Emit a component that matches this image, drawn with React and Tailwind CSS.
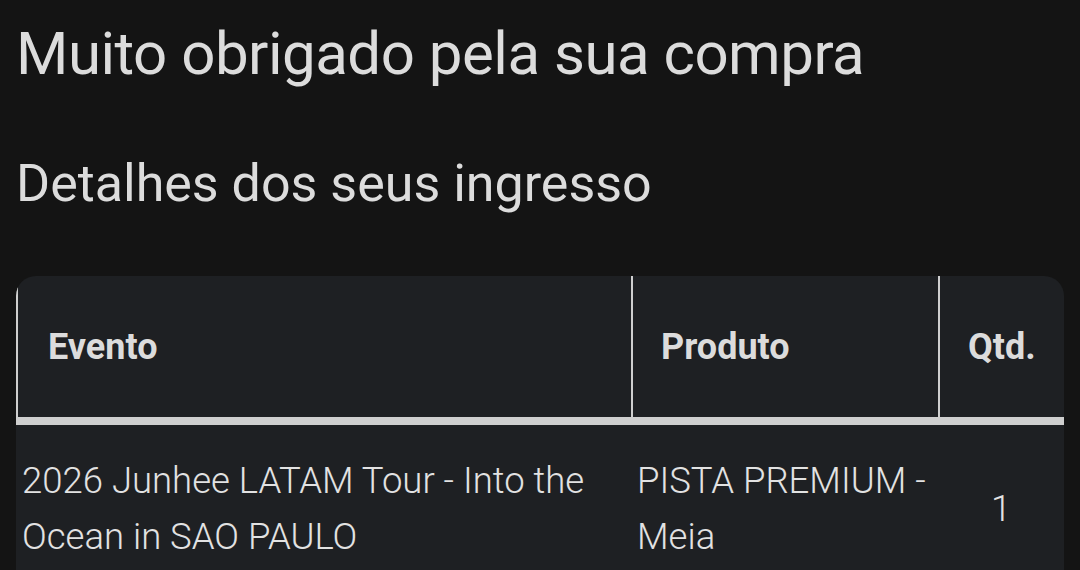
const ROW = {
  evento: '2026 Junhee LATAM Tour - Into the Ocean in SAO PAULO',
  produto: 'PISTA PREMIUM - Meia',
  qtd: 1,
}

export default function App() {
  return (
    <div className="min-h-[570px] bg-[#141414] px-4 pt-[14px] font-['Roboto',sans-serif] text-[#dcdcdc]">
      <h1 className="text-[60px] leading-[80px] tracking-[-0.5px]">Muito obrigado pela sua compra</h1>
      <h2 className="mt-[50px] text-[52px] leading-[80px]">Detalhes dos seus ingresso</h2>

      <table className="mt-[52px] w-[1048px] border-separate border-spacing-0 overflow-hidden rounded-t-[20px] bg-[#1e2023]">
        <thead>
          <tr className="h-[149px] text-left text-[36px] font-bold">
            <th className="w-[615px] border-b-8 border-l-2 border-[#cfcfcf] pl-[30px] align-middle">Evento</th>
            <th className="w-[307px] border-b-8 border-l-2 border-[#cfcfcf] pl-[28px] align-middle">Produto</th>
            <th className="border-b-8 border-l-2 border-[#cfcfcf] pl-[28px] align-middle">Qtd.</th>
          </tr>
        </thead>
        <tbody>
          <tr className="text-[36.5px] font-light leading-[56px] text-[#e2e2e2]">
            <td className="py-[28px] pl-[6px] align-middle">{ROW.evento}</td>
            <td className="py-[28px] pl-[6px] pr-2 align-middle">{ROW.produto}</td>
            <td className="py-[28px] text-center align-middle">{ROW.qtd}</td>
          </tr>
        </tbody>
      </table>
    </div>
  )
}
